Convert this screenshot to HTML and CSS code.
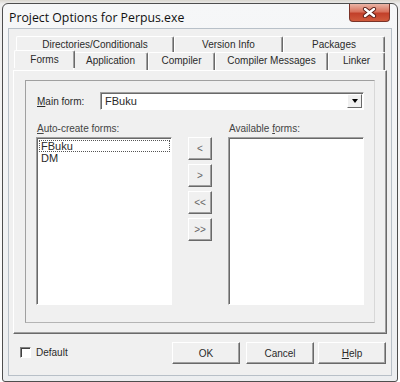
FILE: index.html
```html
<!DOCTYPE html>
<html lang="en">

<head>
    <meta charset="UTF-8">
    <title>Project Options for Perpus.exe</title>
    <link rel="stylesheet" href="styles.css">
</head>

<body>
    <div class="window">
        <div class="titlebar">
            <span class="title">Project Options for Perpus.exe</span>
            <span class="close">
                <svg width="15" height="11" viewBox="0 0 15 11">
                    <path d="M3 2 L12 9 M12 2 L3 9" stroke="#5a1e16" stroke-width="4.2" stroke-linecap="round" />
                    <path d="M3 2 L12 9 M12 2 L3 9" stroke="#ffffff" stroke-width="2.4" stroke-linecap="round" />
                </svg>
            </span>
        </div>

        <div class="client">
            <div class="tabs">
                <div class="tab-row">
                    <div class="tab w-dir">Directories/Conditionals</div>
                    <div class="tab w-ver">Version Info</div>
                    <div class="tab w-pkg">Packages</div>
                </div>
                <div class="tab-row">
                    <div class="tab w-frm active">Forms</div>
                    <div class="tab w-app">Application</div>
                    <div class="tab w-cmp">Compiler</div>
                    <div class="tab w-msg">Compiler Messages</div>
                    <div class="tab w-lnk">Linker</div>
                </div>

                <div class="page">
                    <div class="panel">
                        <div class="main-row">
                            <label class="main-label"><u>M</u>ain form:</label>
                            <div class="combo">
                                <span class="combo-text">FBuku</span>
                                <span class="combo-btn"><span class="arrow"></span></span>
                            </div>
                        </div>

                        <div class="lists">
                            <div class="col">
                                <label class="list-label"><u>A</u>uto-create forms:</label>
                                <div class="listbox">
                                    <div class="item focused">FBuku</div>
                                    <div class="item">DM</div>
                                </div>
                            </div>
                            <div class="movers">
                                <button class="mover">&lt;</button>
                                <button class="mover">&gt;</button>
                                <button class="mover">&lt;&lt;</button>
                                <button class="mover">&gt;&gt;</button>
                            </div>
                            <div class="col">
                                <label class="list-label">Available <u>f</u>orms:</label>
                                <div class="listbox"></div>
                            </div>
                        </div>
                    </div>
                </div>
            </div>

            <div class="footer">
                <label class="check"><span class="box"></span>Default</label>
                <button class="btn btn-ok">OK</button>
                <button class="btn btn-cancel">Cancel</button>
                <button class="btn"><u>H</u>elp</button>
            </div>
        </div>
    </div>
</body>

</html>
```

FILE: styles.css
```css
body {
    margin: 0;
    background: linear-gradient(#d9d6cf 0, #eeeeee 4px, #ffffff 100%);
    font-family: 'Liberation Sans', Arial, sans-serif;
    font-size: 10px;
    color: #2a2a2a;
    height: 382px;
    overflow: hidden;
}

/* window frame */
.window {
    box-sizing: border-box;
    width: 396px;
    height: 379px;
    margin: 3px 0 0 2px;
    padding: 0 5px 5px 5px;
    border: 1px solid #4e4e4e;
    border-radius: 6px 6px 3px 3px;
    background: linear-gradient(#f6f7f8, #eceef0);
    display: flex;
    flex-direction: column;
}

.titlebar {
    height: 24px;
    display: flex;
    align-items: flex-start;
}

.title {
    flex: 1;
    padding: 5px 0 0 1px;
    font-family: 'Open Sans', 'Liberation Sans', sans-serif;
    font-size: 12.3px;
    color: #111;
}

.close {
    box-sizing: border-box;
    width: 41px;
    height: 18px;
    margin-right: 2px;
    border: 1px solid #7a3328;
    border-top: none;
    border-radius: 0 0 4px 4px;
    background: linear-gradient(#eab5a6 0%, #d9735e 45%, #c2402a 55%, #d05a3c 100%);
    display: flex;
    align-items: center;
    justify-content: center;
}

.client {
    flex: 1;
    box-sizing: border-box;
    border: 1px solid #b8c0c8;
    background: #f0f0f0;
    padding: 7px 4px 0 4px;
    display: flex;
    flex-direction: column;
}

/* tab control */
.tabs {
    width: 374px;
    display: flex;
    flex-direction: column;
}

.tab-row {
    display: flex;
    padding-left: 3px;
}

.tab {
    box-sizing: border-box;
    height: 16px;
    border-top: 1px solid #ffffff;
    border-left: 1px solid #ffffff;
    border-right: 1px solid #6a6a6a;
    border-radius: 2px 2px 0 0;
    box-shadow: inset -1px 0 #a0a0a0;
    text-align: center;
    line-height: 15px;
    white-space: nowrap;
}

.tab-row + .tab-row .tab {
    height: 18px;
    line-height: 16px;
}

.tab.active {
    height: 21px;
    margin: -2px -2px -1px -2px;
    padding-top: 1px;
    background: #f0f0f0;
    position: relative;
    z-index: 1;
}

.w-dir { width: 158px; }
.w-ver { width: 109px; }
.w-pkg { width: 102px; }
.w-frm { width: 61px; }
.w-app { width: 75px; }
.w-cmp { width: 67px; }
.w-msg { width: 113px; }
.w-lnk { width: 57px; }

.page {
    box-sizing: border-box;
    height: 264px;
    border: 1px solid;
    border-color: #ffffff #6a6a6a #6a6a6a #ffffff;
    box-shadow: inset -1px -1px #a0a0a0;
    padding: 9px 11px 10px 11px;
}

.panel {
    box-sizing: border-box;
    height: 243px;
    border: 1px solid #a0a0a0;
    border-right-color: #d8d8d8;
    border-bottom-color: #b4b4b4;
    padding: 11px 10px 0 10px;
}

.main-row {
    display: flex;
    align-items: center;
    height: 18px;
}

.main-label {
    width: 63px;
    padding-left: 1px;
}

.combo {
    flex: 1;
    box-sizing: border-box;
    height: 18px;
    border: 1px solid;
    border-color: #a0a0a0 #ffffff #ffffff #a0a0a0;
    box-shadow: inset 1px 1px #696969;
    background: #ffffff;
    display: flex;
    align-items: center;
    padding: 1px 1px 1px 4px;
}

.combo-text {
    flex: 1;
    font-size: 11px;
}

.combo-btn {
    box-sizing: border-box;
    width: 15px;
    height: 14px;
    background: #f0f0f0;
    border: 1px solid;
    border-color: #ffffff #696969 #696969 #ffffff;
    display: flex;
    align-items: center;
    justify-content: center;
}

.arrow {
    width: 0;
    height: 0;
    border-left: 3px solid transparent;
    border-right: 3px solid transparent;
    border-top: 4px solid #000;
}

.lists {
    display: flex;
    margin-top: 12px;
}

.col {
    width: 136px;
    display: flex;
    flex-direction: column;
}

.list-label {
    height: 13px;
    line-height: 13px;
    margin-bottom: 2px;
    padding-left: 1px;
    color: #444;
}

.listbox {
    box-sizing: border-box;
    height: 168px;
    border: 1px solid;
    border-color: #a0a0a0 #ffffff #ffffff #a0a0a0;
    box-shadow: inset 1px 1px #696969;
    background: #ffffff;
    padding: 2px 1px 1px 2px;
}

.item {
    height: 12px;
    line-height: 12px;
    padding-left: 2px;
    font-size: 11px;
}

.item.focused {
    outline: 1px dotted #555;
    outline-offset: -1px;
}

.movers {
    width: 24px;
    margin: 15px 16px 0 16px;
    display: flex;
    flex-direction: column;
    gap: 4px;
}

.mover,
.btn {
    box-sizing: border-box;
    margin: 0;
    padding: 0;
    font: inherit;
    color: #2a2a2a;
    background: #f0f0f0;
    border: 1px solid;
    border-color: #ffffff #696969 #696969 #ffffff;
    box-shadow: inset -1px -1px #a0a0a0;
}

.mover {
    width: 24px;
    height: 23px;
    color: #666;
}

/* bottom bar */
.footer {
    display: flex;
    align-items: flex-start;
    padding-top: 8px;
}

.check {
    flex: 1;
    display: flex;
    align-items: center;
    margin: 5px 0 0 7px;
}

.box {
    box-sizing: border-box;
    width: 11px;
    height: 11px;
    margin-right: 5px;
    background: #ffffff;
    border: 1px solid;
    border-color: #808080 #ffffff #ffffff #808080;
    box-shadow: inset 1px 1px #404040;
}

.btn {
    width: 68px;
    height: 22px;
    margin-right: 4px;
}

.btn-ok {
    margin-right: 6px;
}

.btn:last-child {
    margin-right: 1px;
}
```
